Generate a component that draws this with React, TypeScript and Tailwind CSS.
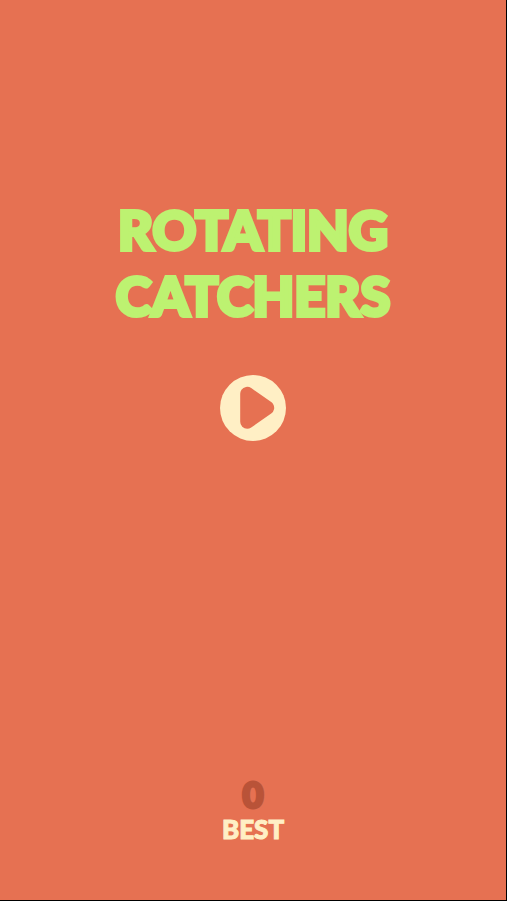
import React from 'react';

const PlayIcon: React.FC = () => (
    <svg viewBox="0 0 66 66" className="w-full h-full" aria-hidden="true">
        <circle cx="33" cy="33" r="33" fill="#ffefc5" />
        <path d="M27.2 18.8 L27.2 46.8 L47.2 32.8 Z" fill="#e67152" stroke="#e67152" strokeWidth="14" strokeLinejoin="round" />
    </svg>
);

const App: React.FC = () => {
    return (
        <main className="min-h-screen bg-[#e67152] border-r border-b border-black flex flex-col items-center justify-between pt-[197px] pb-[56px] font-['Lato',sans-serif] font-black text-center">
            <div className="flex flex-col items-center">
                <h1 className="text-[#bdf271] text-[54px] leading-[66px] [-webkit-text-stroke:4px_#bdf271]">
                    ROTATING<br />CATCHERS
                </h1>
                <button aria-label="Play" className="mt-[46px] w-[66px] h-[66px] rounded-full">
                    <PlayIcon />
                </button>
            </div>
            <div className="flex flex-col items-center">
                <p className="text-[#b95338] text-[36px] leading-[40px] [-webkit-text-stroke:3px_#b95338]">0</p>
                <p className="text-[#ffefc5] text-[26px] leading-[30px] [-webkit-text-stroke:1px_#ffefc5]">BEST</p>
            </div>
        </main>
    );
};

export default App;
